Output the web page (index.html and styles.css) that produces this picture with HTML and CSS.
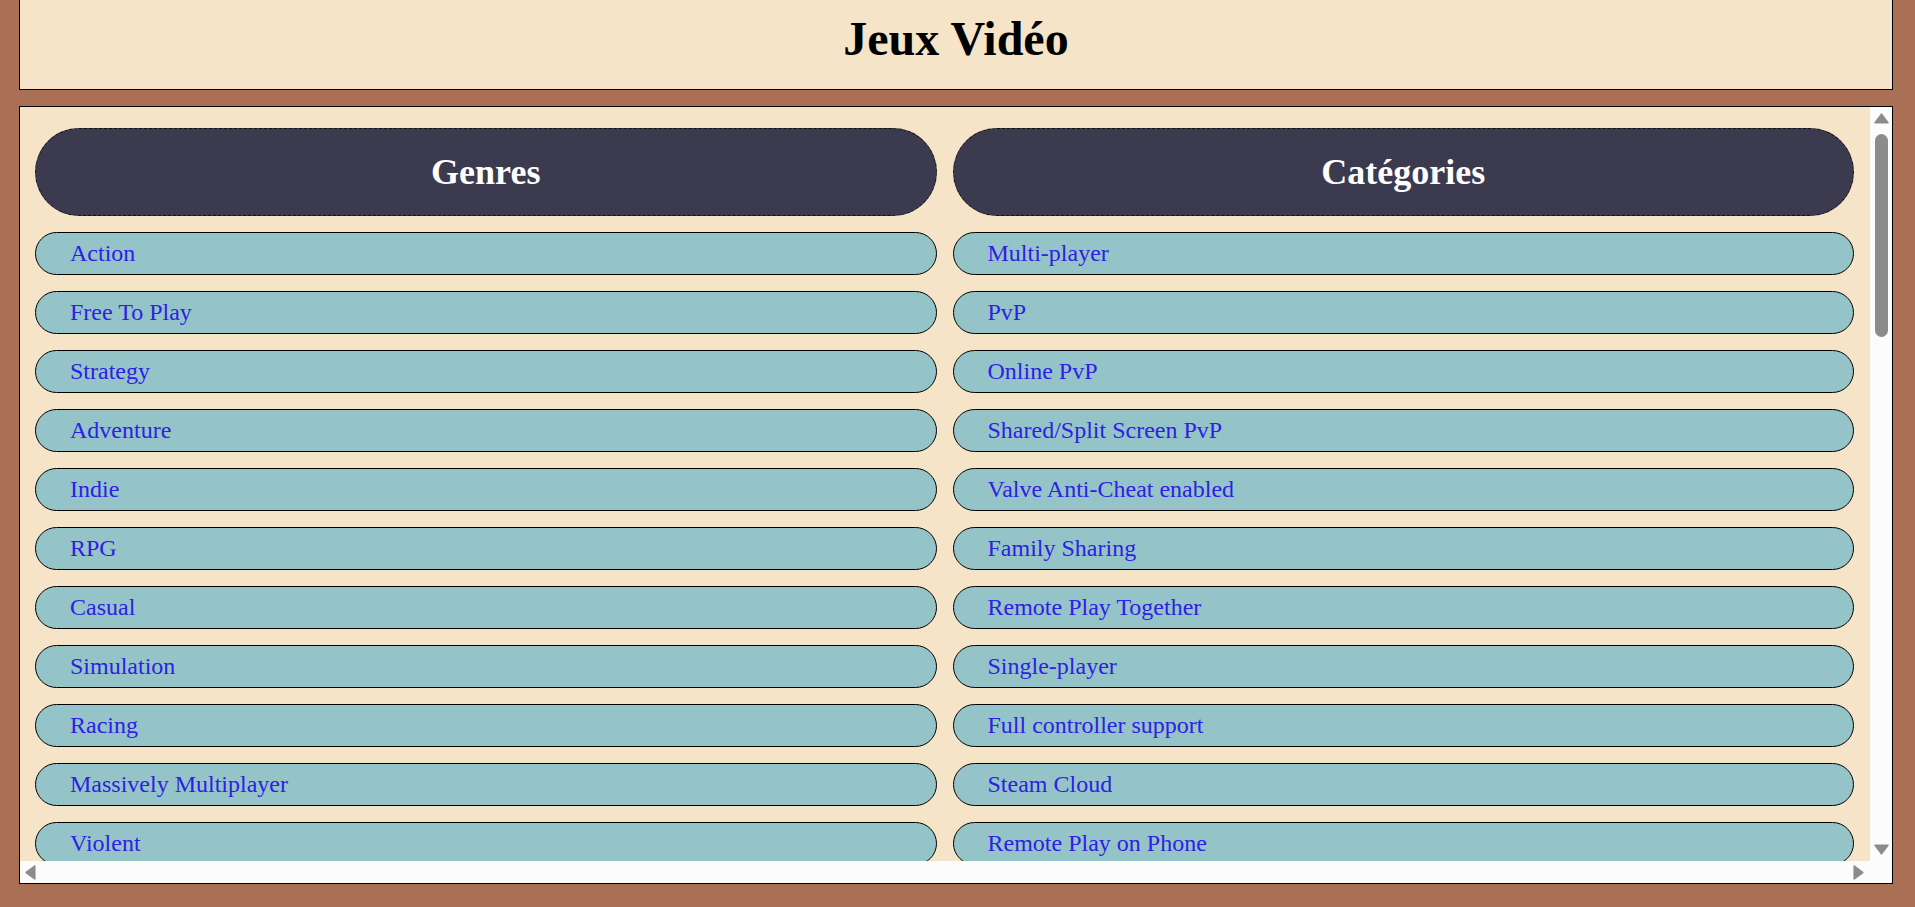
FILE: index.html
```html
<!DOCTYPE html>
<html lang="fr">
<head>
  <meta charset="UTF-8">
  <meta name="viewport" content="width=device-width, initial-scale=1.0">
  <title>Jeux Vidéo</title>
  <link rel="stylesheet" href="styles.css">
</head>
<body>
  <header class="page-header">
    <h1>Jeux Vidéo</h1>
  </header>

  <main class="browser">
    <div class="viewport">
      <div class="columns">
        <section class="column">
          <h2 class="column-title">Genres</h2>
          <a href="#" class="tag">Action</a>
          <a href="#" class="tag">Free To Play</a>
          <a href="#" class="tag">Strategy</a>
          <a href="#" class="tag">Adventure</a>
          <a href="#" class="tag">Indie</a>
          <a href="#" class="tag">RPG</a>
          <a href="#" class="tag">Casual</a>
          <a href="#" class="tag">Simulation</a>
          <a href="#" class="tag">Racing</a>
          <a href="#" class="tag">Massively Multiplayer</a>
          <a href="#" class="tag">Violent</a>
          <a href="#" class="tag">Sports</a>
          <a href="#" class="tag">Early Access</a>
          <a href="#" class="tag">Gore</a>
          <a href="#" class="tag">Nudity</a>
          <a href="#" class="tag">Sexual Content</a>
          <a href="#" class="tag">Utilities</a>
          <a href="#" class="tag">Design &amp; Illustration</a>
          <a href="#" class="tag">Animation &amp; Modeling</a>
          <a href="#" class="tag">Education</a>
          <a href="#" class="tag">Video Production</a>
          <a href="#" class="tag">Software Training</a>
          <a href="#" class="tag">Audio Production</a>
          <a href="#" class="tag">Web Publishing</a>
          <a href="#" class="tag">Game Development</a>
          <a href="#" class="tag">Photo Editing</a>
          <a href="#" class="tag">Accounting</a>
          <a href="#" class="tag">Movie</a>
          <a href="#" class="tag">Documentary</a>
          <a href="#" class="tag">Episodic</a>
          <a href="#" class="tag">Short</a>
          <a href="#" class="tag">Tutorial</a>
          <a href="#" class="tag">360 Video</a>
        </section>

        <section class="column">
          <h2 class="column-title">Catégories</h2>
          <a href="#" class="tag">Multi-player</a>
          <a href="#" class="tag">PvP</a>
          <a href="#" class="tag">Online PvP</a>
          <a href="#" class="tag">Shared/Split Screen PvP</a>
          <a href="#" class="tag">Valve Anti-Cheat enabled</a>
          <a href="#" class="tag">Family Sharing</a>
          <a href="#" class="tag">Remote Play Together</a>
          <a href="#" class="tag">Single-player</a>
          <a href="#" class="tag">Full controller support</a>
          <a href="#" class="tag">Steam Cloud</a>
          <a href="#" class="tag">Remote Play on Phone</a>
          <a href="#" class="tag">Remote Play on Tablet</a>
          <a href="#" class="tag">Remote Play on TV</a>
          <a href="#" class="tag">Steam Achievements</a>
          <a href="#" class="tag">Steam Trading Cards</a>
          <a href="#" class="tag">In-App Purchases</a>
          <a href="#" class="tag">Co-op</a>
          <a href="#" class="tag">Online Co-op</a>
          <a href="#" class="tag">Shared/Split Screen Co-op</a>
          <a href="#" class="tag">Shared/Split Screen</a>
          <a href="#" class="tag">Cross-Platform Multiplayer</a>
          <a href="#" class="tag">Steam Leaderboards</a>
          <a href="#" class="tag">Partial Controller Support</a>
          <a href="#" class="tag">Stats</a>
          <a href="#" class="tag">Includes level editor</a>
          <a href="#" class="tag">Steam Workshop</a>
          <a href="#" class="tag">Captions available</a>
          <a href="#" class="tag">MMO</a>
          <a href="#" class="tag">Commentary available</a>
          <a href="#" class="tag">Tracked Controller Support</a>
          <a href="#" class="tag">VR Support</a>
          <a href="#" class="tag">VR Only</a>
          <a href="#" class="tag">LAN PvP</a>
          <a href="#" class="tag">LAN Co-op</a>
          <a href="#" class="tag">Includes Source SDK</a>
          <a href="#" class="tag">SteamVR Collectibles</a>
          <a href="#" class="tag">HDR available</a>
          <a href="#" class="tag">Steam Turn Notifications</a>
          <a href="#" class="tag">Mods</a>
          <a href="#" class="tag">Mods (require HL2)</a>
          <a href="#" class="tag">Steam Timeline</a>
          <a href="#" class="tag">Adjustable Difficulty</a>
          <a href="#" class="tag">Playable without Timed Input</a>
        </section>
      </div>
    </div>

    <!-- scrollbars drawn by hand, the capture shows classic ones -->
    <div class="vbar">
      <svg class="arrow arrow-v" viewBox="0 0 14 10"><path d="M7 1 L13 9 H1 Z" stroke="#8c8c8c" stroke-width="1.5" stroke-linejoin="round"/></svg>
      <div class="thumb"></div>
      <svg class="arrow arrow-v arrow-down" viewBox="0 0 14 10"><path d="M7 9 L13 1 H1 Z" stroke="#8c8c8c" stroke-width="1.5" stroke-linejoin="round"/></svg>
    </div>
    <div class="hbar">
      <svg class="arrow arrow-h" viewBox="0 0 10 14"><path d="M1 7 L9 1 V13 Z" stroke="#8c8c8c" stroke-width="1.5" stroke-linejoin="round"/></svg>
      <svg class="arrow arrow-h" viewBox="0 0 10 14"><path d="M9 7 L1 1 V13 Z" stroke="#8c8c8c" stroke-width="1.5" stroke-linejoin="round"/></svg>
    </div>
    <div class="corner"></div>
  </main>
</body>
</html>
```

FILE: styles.css
```css
html, body {
  height: 100%;
}

body {
  font-family: "Liberation Serif", "Times New Roman", serif;
  font-size: 24px;
  margin: 0;
  padding: 0 22px 24px 19px;
  box-sizing: border-box;
  background-color: #aa7055;
  overflow: hidden;
}

.page-header {
  background-color: #f5e4c8;
  border: 1px solid #000;
  border-top: 0;
  padding: 11px 0 23px;
  text-align: center;
}

.page-header h1 {
  font-size: 48px;
  margin: 0;
  color: #000;
}

.browser {
  margin-top: 16px;
  height: 778px;
  box-sizing: border-box;
  background-color: #f5e4c8;
  border: 1px solid #000;
  display: grid;
  grid-template-columns: 1fr 22px;
  grid-template-rows: 1fr 22px;
}

.viewport {
  overflow: hidden;
  min-height: 0;
}

.columns {
  display: grid;
  grid-template-columns: 1fr 1fr;
  gap: 16px;
  padding: 21px 16px 15px 15px;
}

.column {
  display: flex;
  flex-direction: column;
  gap: 16px;
  min-width: 0;
}

.column-title {
  margin: 0;
  padding: 22px 0 21px;
  font-size: 36px;
  line-height: 43px;
  text-align: center;
  color: #fff;
  background-color: #3c3a4f;
  border: 1px dashed #111;
  border-radius: 60px;
}

.tag {
  display: block;
  padding: 7px 34px;
  line-height: 27px;
  color: #2e20e4;
  text-decoration: none;
  background-color: #94c4c8;
  border: 1px solid #000;
  border-radius: 999px;
}

.tag:hover {
  background-color: #a6d0d3;
}

/* fake scrollbars */
.vbar,
.hbar,
.corner {
  background-color: #fcfcfc;
}

.vbar {
  display: flex;
  flex-direction: column;
  align-items: center;
}

.hbar {
  display: flex;
  justify-content: space-between;
  align-items: center;
  padding: 0 6px 0 5px;
}

.arrow {
  fill: #8c8c8c;
  display: block;
}

.arrow-v {
  width: 15px;
  height: 11px;
  margin-top: 6px;
}

.arrow-down {
  margin-top: auto;
  margin-bottom: 6px;
}

.arrow-h {
  width: 11px;
  height: 15px;
}

.thumb {
  width: 13px;
  height: 203px;
  margin-top: 10px;
  background-color: #8c8c8c;
  border-radius: 7px;
}
```
